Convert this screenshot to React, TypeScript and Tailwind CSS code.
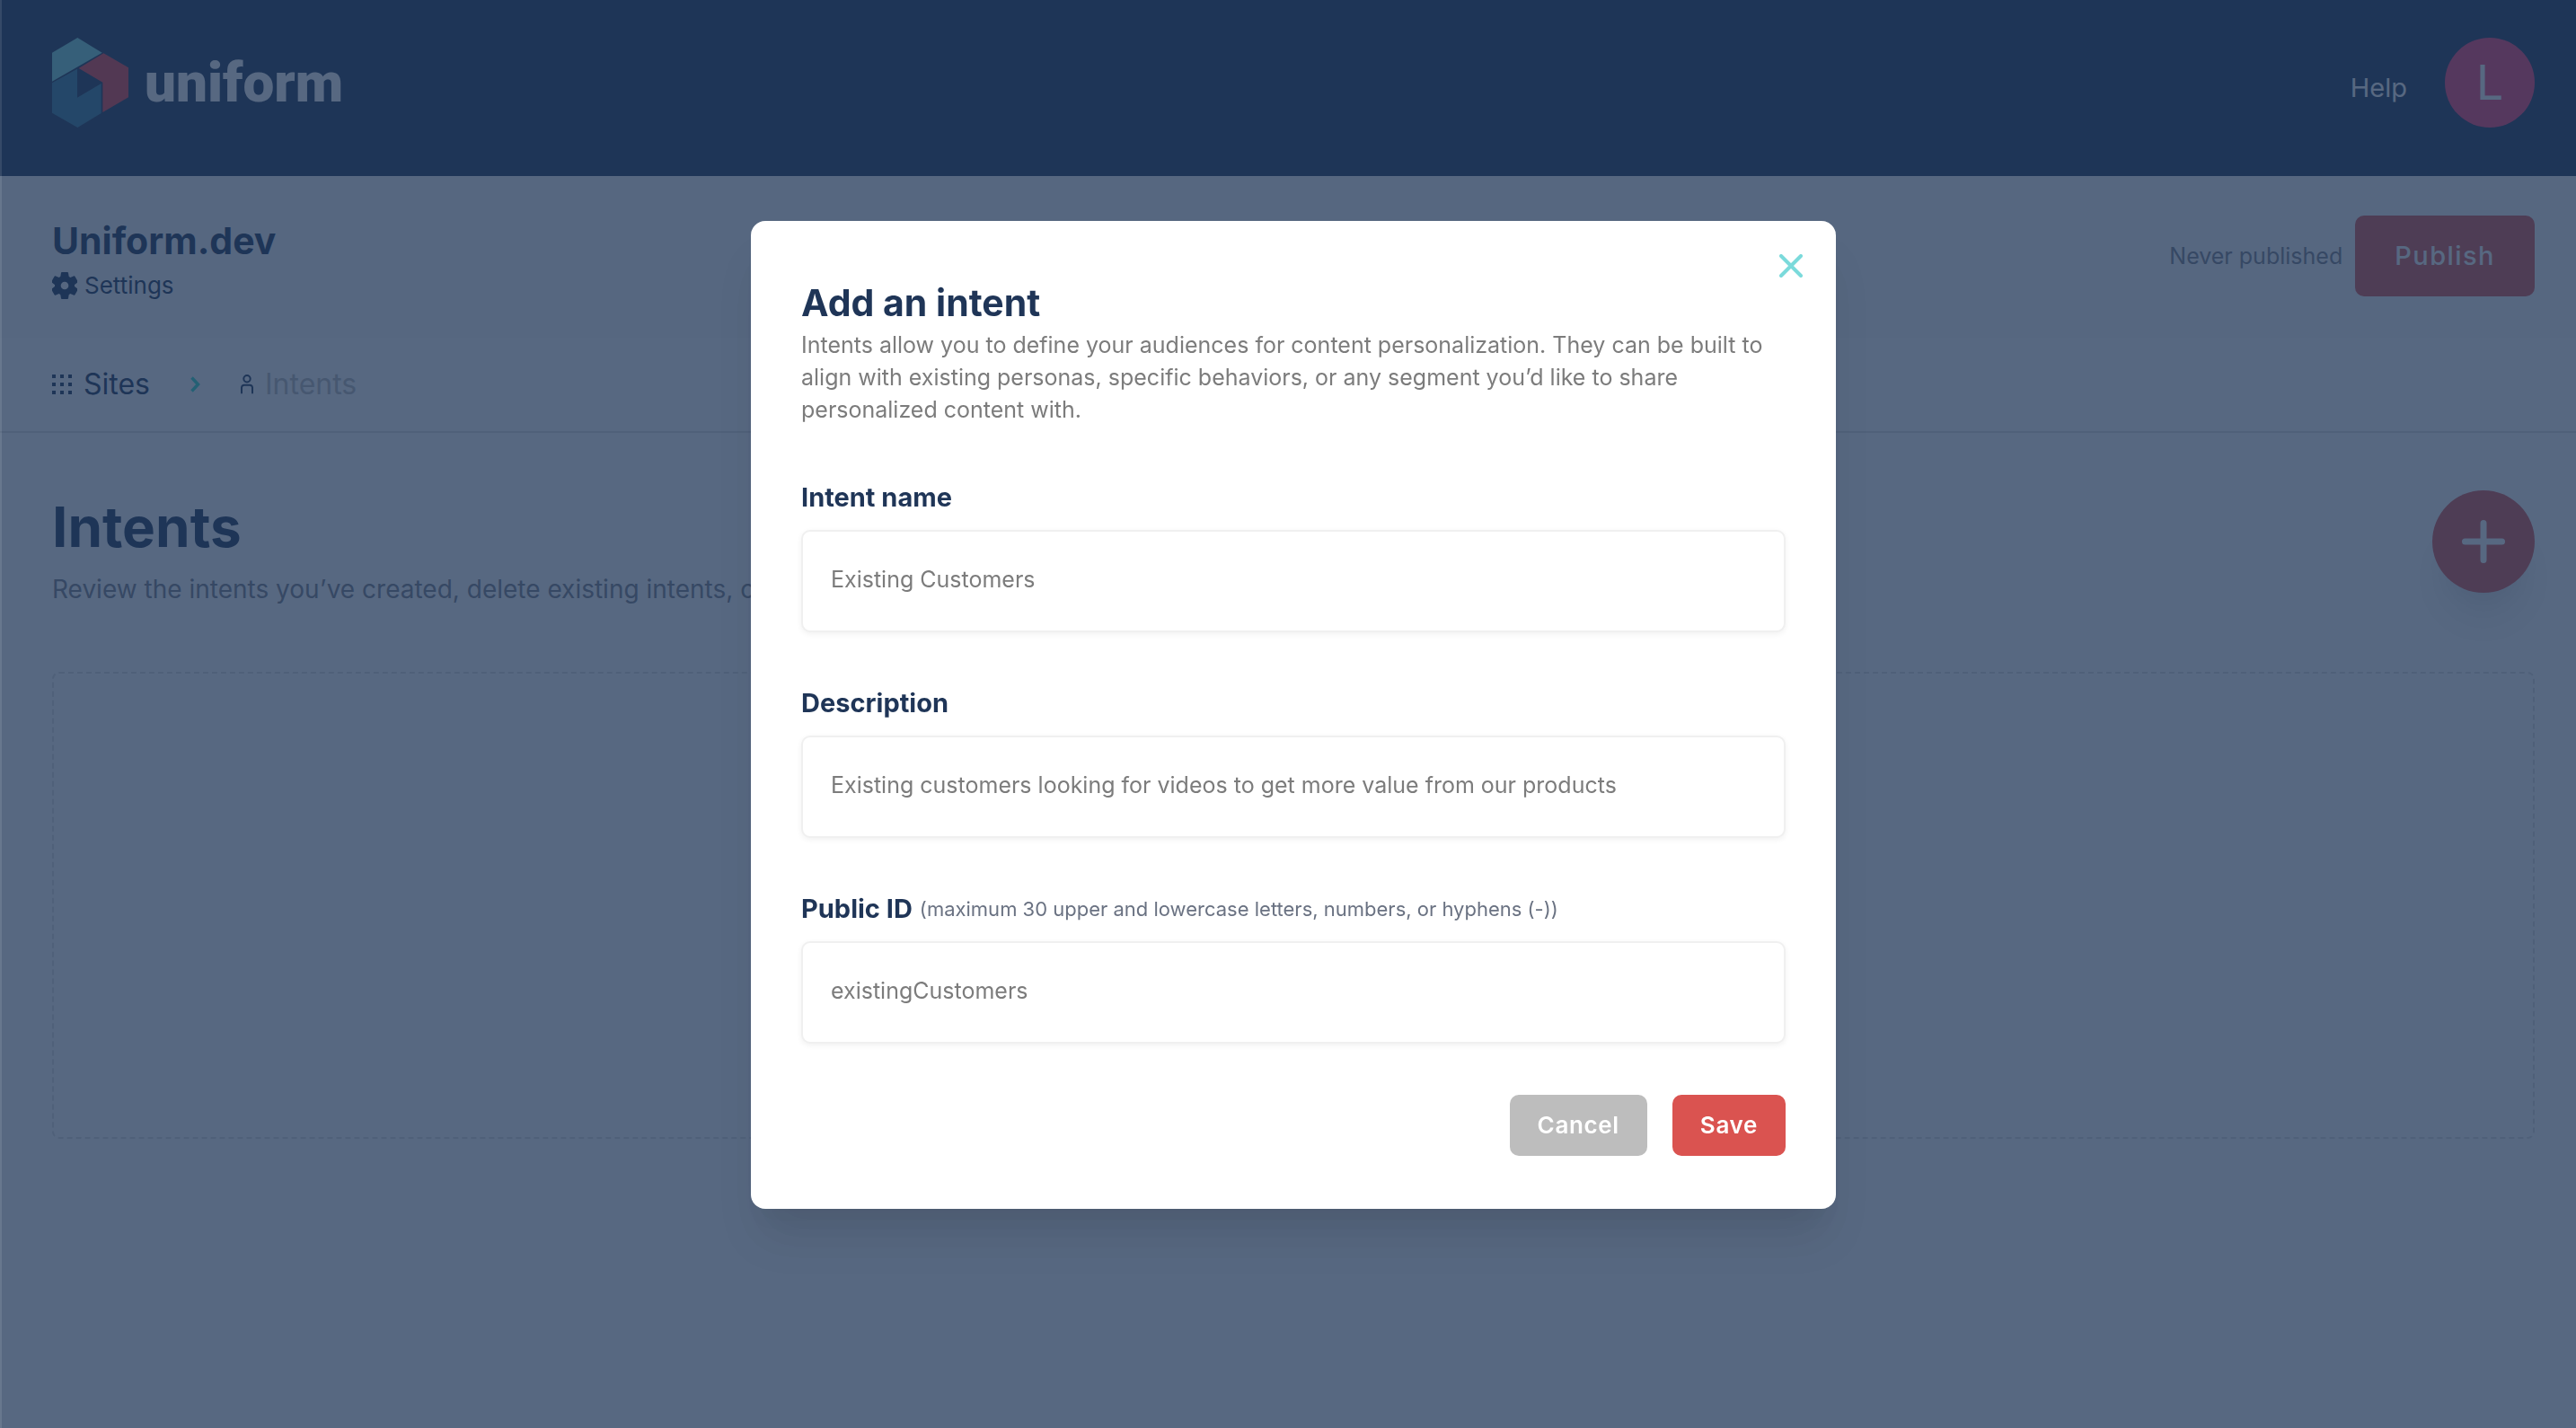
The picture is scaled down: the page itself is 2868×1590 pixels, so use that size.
import type { ReactNode } from "react";

function Logo() {
  return (
    <svg viewBox="174 126 255 300" className="h-[100px] w-[85px]" aria-hidden="true">
      <polygon points="259,126 341,176 174,272 174,176" fill="#7bdade" />
      <polygon points="346,178 429,226 429,325 343,375 343,275 263,228" fill="#eb424a" />
      <polygon points="174,277 258,230 258,326 338,279 338,378 259,426 174,377" fill="#377e9e" />
    </svg>
  );
}

function GearIcon() {
  return (
    <svg viewBox="-42 -45 84 90" className="h-[30px] w-[28px] text-[#1f3557]" aria-hidden="true">
      <circle r="23" fill="none" stroke="currentColor" strokeWidth="20" />
      {[0, 60, 120, 180, 240, 300].map((angle) => (
        <path
          key={angle}
          transform={`rotate(${angle})`}
          d="M-15 -24 L-12 -43 Q-11.500 -45 -9.500 -45 H9.500 Q11.500 -45 12 -43 L15 -24 Z"
          fill="currentColor"
        />
      ))}
    </svg>
  );
}

function GridIcon() {
  return (
    <svg viewBox="0 0 22 22" className="h-[22px] w-[22px] text-[#1f3557]" fill="currentColor" aria-hidden="true">
      {[0, 9, 18].map((y) => [0, 9, 18].map((x) => <rect key={`${x}-${y}`} x={x} y={y} width="4" height="4" />))}
    </svg>
  );
}

function ChevronIcon() {
  return (
    <svg viewBox="0 0 11 18" className="h-[18px] w-[11px] text-[#37e0cc]" aria-hidden="true">
      <path d="M1.500 1.500 L8.500 9 L1.500 16.500" fill="none" stroke="currentColor" strokeWidth="3.500" />
    </svg>
  );
}

function PersonIcon() {
  return (
    <svg
      viewBox="0 0 14 22"
      className="h-[22px] w-[14px] text-[#1f3557]"
      fill="none"
      stroke="currentColor"
      strokeWidth="2"
      strokeLinecap="round"
      aria-hidden="true"
    >
      <circle cx="7" cy="4.700" r="3.700" />
      <path d="M1 20.500 V14.500 A3 3 0 0 1 4 11.800 H10 A3 3 0 0 1 13 14.500 V20.500" />
    </svg>
  );
}

function Header() {
  return (
    <header className="flex items-center justify-between bg-[#1f3557] pt-[42px] pr-[46px] pb-[54px] pl-[58px]">
      <a href="#" className="flex items-center gap-[18px]">
        <Logo />
        <span className="font-[Roboto,sans-serif] text-[62px] leading-none font-black text-white">uniform</span>
      </a>
      <div className="flex items-center gap-[42px]">
        <a href="#" className="pt-3 text-[29px] leading-10 text-white">
          Help
        </a>
        <button
          type="button"
          aria-label="Account"
          className="flex h-[100px] w-[100px] items-center justify-center rounded-full bg-[#f74276] text-[54px] leading-none text-white"
        >
          L
        </button>
      </div>
    </header>
  );
}

function ProjectBar() {
  return (
    <section className="flex items-start justify-between bg-[#fafafa] pt-11 pr-[46px] pb-[38px] pl-[58px]">
      <div>
        <h2 className="text-[41px] leading-[56px] font-bold">Uniform.dev</h2>
        <a href="#" className="mt-0.5 flex items-center gap-2 text-[26px] leading-10">
          <GearIcon />
          Settings
        </a>
      </div>
      <div className="flex items-center gap-[14px]">
        <span className="text-[25px] leading-10 text-[#7b808a]">Never published</span>
        <button
          type="button"
          className="h-[90px] rounded-[10px] bg-[#da5350] px-11 text-[29px] font-medium tracking-wider text-white"
        >
          Publish
        </button>
      </div>
    </section>
  );
}

function Breadcrumbs() {
  return (
    <nav aria-label="Breadcrumb" className="flex h-[106px] items-center border-b-2 border-[#e0e0e0] pl-[58px] text-[32px]">
      <a href="#" className="flex items-center gap-[13px]">
        <GridIcon />
        Sites
      </a>
      <span className="px-[45px]">
        <ChevronIcon />
      </span>
      <span className="flex items-center gap-[13px] text-[#bdbdbd]">
        <PersonIcon />
        Intents
      </span>
    </nav>
  );
}

function IntentList() {
  return (
    <main className="pt-16 pr-[46px] pl-[58px]">
      <div className="flex items-start justify-between">
        <div>
          <h1 className="text-[62px] leading-[82px] font-bold">Intents</h1>
          <p className="mt-2 text-[28px] leading-10 text-[#7b808a]">
            Review the intents you’ve created, delete existing intents, or create new ones.
          </p>
        </div>
        <button
          type="button"
          aria-label="Add an intent"
          className="flex h-[114px] w-[114px] items-center justify-center rounded-full bg-[#da5350] text-white shadow-[0_40px_50px_-10px_rgba(0,0,0,0.1),0_20px_20px_-10px_rgba(0,0,0,0.04)]"
        >
          <svg viewBox="0 0 48 48" className="h-12 w-12" stroke="currentColor" strokeWidth="7" strokeLinecap="round" aria-hidden="true">
            <path d="M24 3.500 V44.500 M3.500 24 H44.500" />
          </svg>
        </button>
      </div>
      <div className="mt-[72px] h-[520px] rounded-lg border-2 border-dashed border-[#e0e0e0]" />
    </main>
  );
}

function Field({ id, label, hint, value }: { id: string; label: string; hint?: ReactNode; value: string }) {
  return (
    <div className="flex flex-col gap-[14px]">
      <label htmlFor={id} className="flex items-center gap-2 text-[29px] leading-[44px] font-bold">
        {label}
        {hint && <span className="text-[22px] font-normal text-gray-500">{hint}</span>}
      </label>
      <input
        id={id}
        type="text"
        defaultValue={value}
        className="h-[114px] w-full rounded-[10px] border-2 border-[#f0f0f0] bg-white px-[31px] pb-1 text-[25px] text-[#7c7c7c] shadow-[0_2px_6px_rgba(0,0,0,0.06)]"
      />
    </div>
  );
}

function AddIntentDialog() {
  return (
    <div
      role="dialog"
      aria-modal="true"
      aria-labelledby="dialog-title"
      className="relative w-full max-w-[1208px] rounded-2xl bg-white px-14 pt-[62px] pb-[59px] shadow-[0_40px_50px_-10px_rgba(0,0,0,0.1),0_20px_20px_-10px_rgba(0,0,0,0.04)]"
    >
      <button type="button" aria-label="Close" className="absolute top-[37px] right-[37px] text-[#7bdadb]">
        <svg viewBox="0 0 26 26" className="h-[26px] w-[26px]" stroke="currentColor" strokeWidth="4" strokeLinecap="round" aria-hidden="true">
          <path d="M2 2 L24 24 M24 2 L2 24" />
        </svg>
      </button>
      <h2 id="dialog-title" className="text-[41px] leading-[58px] font-bold">
        Add an intent
      </h2>
      <p className="text-[25px] leading-9 text-[#7c7c7c]">
        Intents allow you to define your audiences for content personalization. They can be built to align with existing
        personas, specific behaviors, or any segment you’d like to share personalized content with.
      </p>
      <form className="mt-[58px] flex flex-col gap-[57px]">
        <Field id="intent-name" label="Intent name" value="Existing Customers" />
        <Field
          id="intent-description"
          label="Description"
          value="Existing customers looking for videos to get more value from our products"
        />
        <Field
          id="intent-public-id"
          label="Public ID"
          hint="(maximum 30 upper and lowercase letters, numbers, or hyphens (-))"
          value="existingCustomers"
        />
        <div className="flex justify-end gap-7 text-[26px] font-semibold tracking-wide text-white">
          <button type="button" className="h-[68px] rounded-[10px] bg-[#bdbdbd] px-[31px] pb-0.5">
            Cancel
          </button>
          <button type="button" className="h-[68px] rounded-[10px] bg-[#da5350] px-[31px] pb-0.5">
            Save
          </button>
        </div>
      </form>
    </div>
  );
}

export default function App() {
  return (
    <div className="min-h-screen bg-white font-[Inter,sans-serif] text-[#1f3557]">
      <Header />
      <ProjectBar />
      <Breadcrumbs />
      <IntentList />
      <div className="fixed inset-0 flex items-center justify-center border-l-2 border-white/10 bg-[#1f3557]/75 pt-0.5 pl-[10px]">
        <AddIntentDialog />
      </div>
    </div>
  );
}
